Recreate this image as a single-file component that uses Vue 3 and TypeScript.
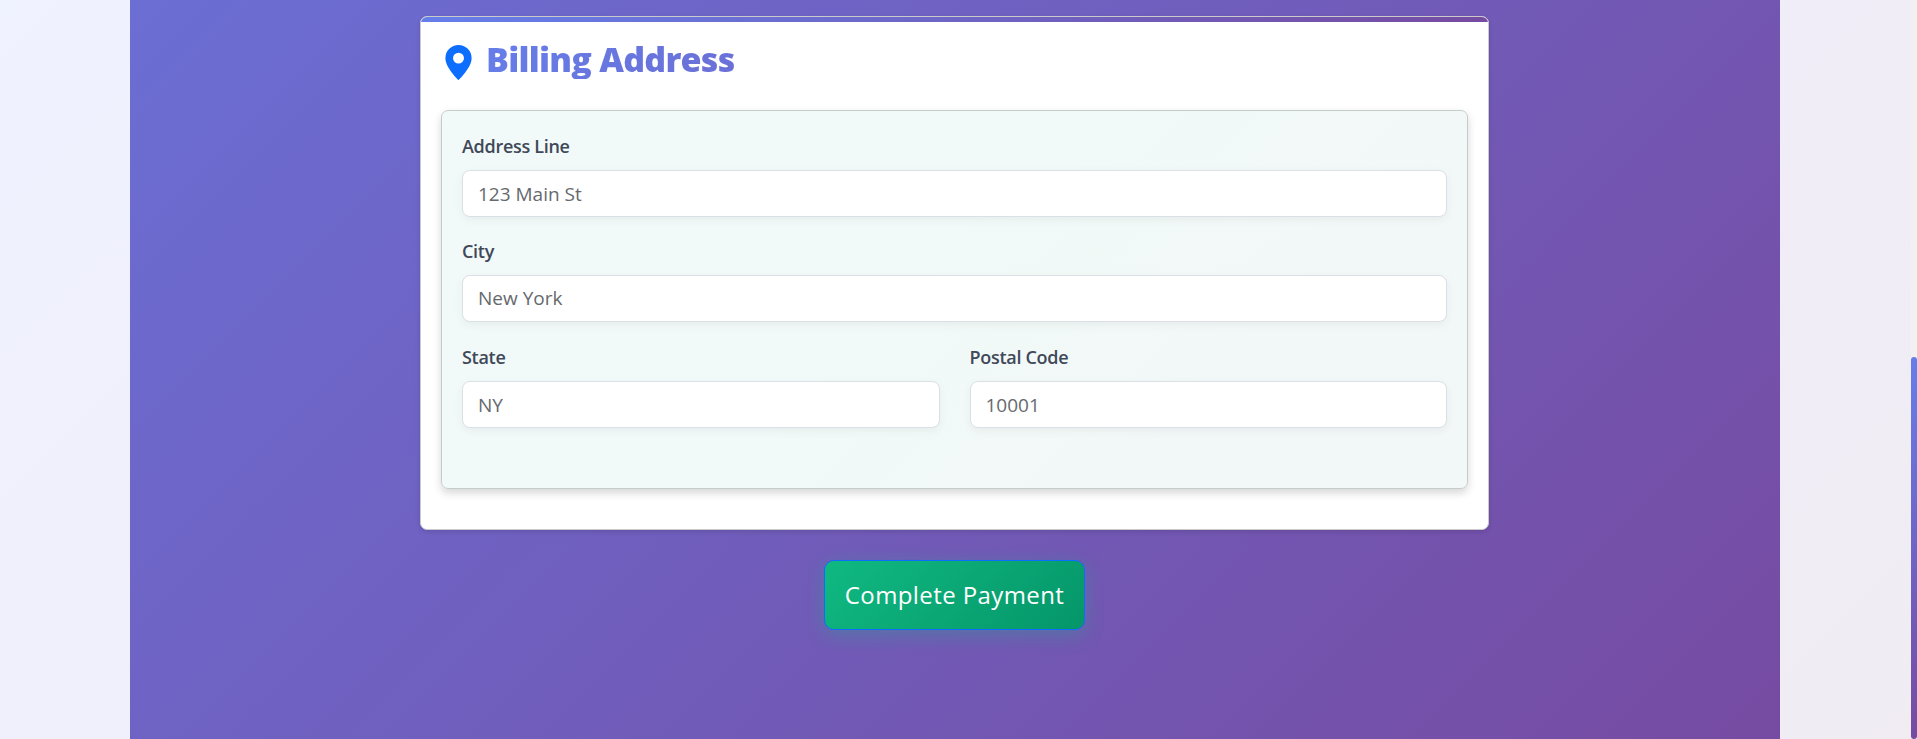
<script setup lang="ts">
import { ref } from 'vue'

interface Field {
  id: string
  label: string
  placeholder: string
  half?: boolean
}

const fields: Field[] = [
  { id: 'address', label: 'Address Line', placeholder: '123 Main St' },
  { id: 'city', label: 'City', placeholder: 'New York' },
  { id: 'state', label: 'State', placeholder: 'NY', half: true },
  { id: 'postal', label: 'Postal Code', placeholder: '10001', half: true },
]

const values = ref<Record<string, string>>({ address: '', city: '', state: '', postal: '' })
</script>

<template>
  <div class="page">
    <main class="checkout">
      <section class="card">
        <div class="accent"></div>
        <header class="heading">
          <svg class="pin" viewBox="0 0 16 16" fill="currentColor" aria-hidden="true">
            <path d="M8 16s6-5.686 6-10A6 6 0 0 0 2 6c0 4.314 6 10 6 10m0-7.5a2.5 2.5 0 1 1 0-5 2.5 2.5 0 0 1 0 5" />
          </svg>
          <h2 class="title">Billing Address</h2>
        </header>
        <form class="panel" @submit.prevent>
          <div v-for="f in fields" :key="f.id" class="field" :class="[{ half: f.half }, f.id]">
            <label class="label" :for="f.id">{{ f.label }}</label>
            <input :id="f.id" v-model="values[f.id]" class="input" type="text" :placeholder="f.placeholder" />
          </div>
        </form>
      </section>
      <button class="pay" type="button">Complete Payment</button>
    </main>
    <div class="track"><div class="thumb"></div></div>
  </div>
</template>

<style>
body {
  margin: 0;
  overflow: hidden;
}
</style>

<style scoped>
* {
  box-sizing: border-box;
}
.page {
  display: flex;
  height: 739px;
  padding-left: 130px;
  justify-content: space-between;
  overflow: hidden;
  background: linear-gradient(135deg, #eff3ff 0%, #f0f0fc 22%, #f0edf7 78%, #f0ecf2 100%);
  font-family: "Open Sans", "Noto Sans", sans-serif;
}
.checkout {
  width: 1650px;
  height: 739px;
  padding: 16px 1px 0 0;
  display: flex;
  flex-direction: column;
  align-items: center;
  background: linear-gradient(135deg, #667eea 0%, #764ba2 100%) bottom / 100% 1850px no-repeat;
}
.card {
  width: 1069px;
  height: 514px;
  flex: none;
  border: 1px solid #cacacd;
  border-radius: 7px;
  background: #fff;
  overflow: hidden;
  box-shadow: 0 2px 5px rgba(0, 0, 0, 0.12);
}
.accent {
  height: 5px;
  background: linear-gradient(90deg, #667eea, #764ba2);
}
.heading {
  height: 88px;
  padding: 22px 20px 0;
  display: flex;
  align-items: flex-start;
}
.pin {
  width: 35px;
  height: 35px;
  margin-top: 1px;
  color: #0d6efd;
}
.title {
  flex: 1;
  margin: -5px 0 0 10px;
  font-size: 34px;
  line-height: 40px;
  font-weight: 800;
  letter-spacing: -0.75px;
  color: transparent;
  background: linear-gradient(135deg, #667eea 0%, #764ba2 100%);
  background-clip: text;
  -webkit-background-clip: text;
}
.panel {
  width: 1027px;
  height: 379px;
  margin-left: 20px;
  padding: 20px;
  display: grid;
  grid-template-columns: 1fr 1fr;
  column-gap: 30px;
  grid-template-rows: 105px 106px 106px;
  border: 1px solid #c5cdcb;
  border-radius: 7px;
  background: linear-gradient(135deg, #f1faf8 0%, #f1faf8 45%, #f2f8f7 75%, #f2f8f7 100%);
  box-shadow: 0 4px 8px rgba(0, 0, 0, 0.16);
}
.field {
  grid-column: span 2;
}
.field.half {
  grid-column: span 1;
}
.label {
  display: block;
  height: 39px;
  line-height: 30px;
  font-size: 18px;
  font-weight: 600;
  letter-spacing: -0.3px;
  color: #404859;
}
.input {
  display: block;
  width: 100%;
  height: 47px;
  padding: 0 15px;
  border: 1px solid #dbe0e6;
  border-radius: 8px;
  background: #fff;
  font: 400 19px/28px "Open Sans", "Noto Sans", sans-serif;
  color: #212529;
  box-shadow: 0 3px 10px rgba(0, 0, 0, 0.05);
}
.city .input {
  padding-bottom: 2px;
}
.input::placeholder {
  color: #66696d;
  opacity: 1;
}
.pay {
  width: 261px;
  height: 70px;
  flex: none;
  margin-top: 30px;
  padding: 0;
  border: 1px solid #0d6efd;
  border-radius: 10px;
  background: linear-gradient(135deg, #10b981, #059669) border-box;
  color: #fff;
  font: 400 24px/36px "Open Sans", "Noto Sans", sans-serif;
  letter-spacing: 0.4px;
  white-space: nowrap;
  box-shadow: 0 5px 19px rgba(16, 185, 129, 0.3);
}
.track {
  width: 6px;
  height: 739px;
  padding-top: 357px;
  background: #f1f1f1;
}
.thumb {
  height: 382px;
  border-radius: 3px;
  background: linear-gradient(180deg, #667eea, #764ba2);
}
</style>
